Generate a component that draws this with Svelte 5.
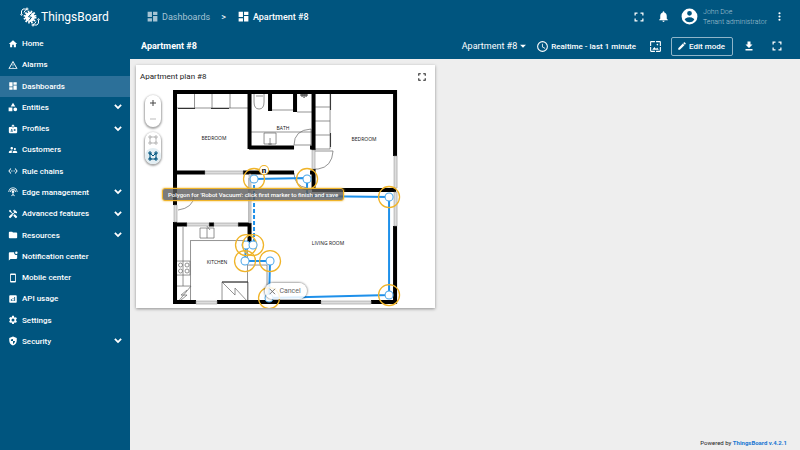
<script>
  const material = {
    home: "M10 20v-6h4v6h5v-8h3L12 3 2 12h3v8z",
    alarms: "M12 5.99L19.53 19H4.47L12 5.99M12 2L1 21h22L12 2zm1 14h-2v2h2v-2zm0-6h-2v4h2v-4z",
    dashboards: "M3 13h8V3H3v10zm0 8h8v-6H3v6zm10 0h8V11h-8v10zm0-18v6h8V3h-8z",
    entities: "M12 2l5.500 9h-11zM1.500 13h9v9h-9zM17.500 13a4.500 4.500 0 1 1 0 9 4.500 4.500 0 0 1 0-9z",
    profiles: "M20 7h-5V4c0-1.100-.9-2-2-2h-2c-1.100 0-2 .9-2 2v3H4c-1.100 0-2 .9-2 2v11c0 1.100.9 2 2 2h16c1.100 0 2-.9 2-2V9c0-1.100-.9-2-2-2zM9 12a1.500 1.500 0 1 1 0 3 1.500 1.500 0 0 1 0-3zm3 6H6v-.75c0-1 2-1.500 3-1.500s3 .5 3 1.500V18zm1-9h-2V4h2v5zm5 7.500h-4V15h4v1.500zm0-3h-4V12h4v1.500z",
    customers: "M16.500 12c1.380 0 2.490-1.120 2.490-2.500S17.880 7 16.500 7 14 8.120 14 9.500s1.120 2.500 2.500 2.500zM9 11c1.660 0 2.990-1.340 2.990-3S10.660 5 9 5 6 6.340 6 8s1.340 3 3 3zm7.500 3c-1.830 0-5.500.92-5.500 2.750V19h11v-2.250c0-1.830-3.670-2.750-5.500-2.750zM9 13c-2.330 0-7 1.170-7 3.500V19h7v-2.250c0-.85.33-2.340 2.370-3.470C10.500 13.100 9.660 13 9 13z",
    rules: "M7.770 6.760L6.230 5.480.82 12l5.410 6.520 1.540-1.280L3.420 12l4.350-5.240zM7 13h2v-2H7v2zm10-2h-2v2h2v-2zm-6 2h2v-2h-2v2zm6.770-7.520l-1.540 1.280L20.580 12l-4.350 5.240 1.540 1.280L23.180 12l-5.410-6.520z",
    edge: "M11 14.300a3 3 0 1 1 2 0V17.600l3.400 3.400-1.400 1.400-3-3-3 3L7.600 21 11 17.600zM12 5c-3.900 0-7 3.100-7 7h2c0-2.800 2.200-5 5-5s5 2.200 5 5h2c0-3.900-3.100-7-7-7zm0-4C5.900 1 1 5.900 1 12h2a9 9 0 0 1 18 0h2c0-6.100-4.900-11-11-11z",
    advanced: "M21.670 18.170l-5.300-5.300h-.99l-2.540 2.540v.99l5.300 5.300c.39.39 1.020.39 1.410 0l2.120-2.120c.39-.38.39-1.020 0-1.410zM17.340 10.190l1.410-1.410 2.120 2.120c1.170-1.170 1.170-3.070 0-4.240l-3.540-3.540-1.410 1.410V1.710L15.220 1l-3.540 3.540.71.71h2.830l-1.410 1.410 1.060 1.060-2.890 2.890-4.130-4.130V5.060L4.830 2.040 2 4.870 5.030 7.900h1.410l4.130 4.130-.85.85H7.600l-5.300 5.300c-.39.39-.39 1.020 0 1.410l2.120 2.120c.39.39 1.020.39 1.410 0l5.300-5.300v-2.120l5.150-5.150 1.060 1.050z",
    resources: "M10 4H4c-1.100 0-2 .9-2 2v12c0 1.100.9 2 2 2h16c1.100 0 2-.9 2-2V8c0-1.100-.9-2-2-2h-8l-2-2z",
    notifications: "M22 9v8c0 1.100-.9 2-2 2H6l-4 4V5c0-1.100.9-2 2-2h11a5 5 0 0 0 7 6zM17 4a3 3 0 1 0 6 0 3 3 0 0 0-6 0z",
    mobile: "M17 1H7c-1.100 0-2 .9-2 2v18c0 1.100.9 2 2 2h10c1.100 0 2-.9 2-2V3c0-1.100-.9-2-2-2zm0 18H7V5h10v14z",
    usage: "M19 3H5c-1.100 0-2 .9-2 2v14c0 1.100.9 2 2 2h14c1.100 0 2-.9 2-2V5c0-1.100-.9-2-2-2zM9 17H7v-5h2v5zm4 0h-2v-3h2v3zm0-5h-2v-2h2v2zm4 5h-2V7h2v10z",
    settings: "M19.140 12.940c.04-.3.06-.61.06-.94s-.02-.64-.07-.94l2.030-1.580a.49.49 0 0 0 .12-.61l-1.920-3.320a.49.49 0 0 0-.59-.22l-2.390.96a7 7 0 0 0-1.620-.94l-.36-2.540A.48.48 0 0 0 13.920 2h-3.840c-.24 0-.43.17-.47.41l-.36 2.540c-.59.24-1.130.57-1.620.94l-2.390-.96a.49.49 0 0 0-.59.22L2.740 8.870a.48.48 0 0 0 .12.610l2.030 1.580a6 6 0 0 0 0 1.880l-2.030 1.580a.49.49 0 0 0-.12.610l1.920 3.320c.12.22.37.29.59.22l2.390-.96c.5.38 1.030.7 1.620.94l.36 2.540c.05.24.24.41.48.41h3.840c.24 0 .44-.17.47-.41l.36-2.540a7 7 0 0 0 1.620-.94l2.390.96c.22.08.47 0 .59-.22l1.920-3.320a.48.48 0 0 0-.12-.610zM12 15.600a3.600 3.600 0 1 1 0-7.200 3.600 3.600 0 0 1 0 7.200z",
    security: "M12 1L3 5v6c0 5.550 3.840 10.740 9 12 5.160-1.260 9-6.450 9-12V5l-9-4zm0 6v5h5c-.5 3.500-2.500 6-5 7v-7H7V8.200z",
    fullscreen: "M3 3h6v2.500H5.500V9H3zM15 3h6v6h-2.500V5.500H15zM3 15h2.500v3.500H9V21H3zM18.500 15H21v6h-6v-2.500h3.500z",
    bell: "M12 22c1.100 0 2-.9 2-2h-4c0 1.100.9 2 2 2zm6-6v-5c0-3.070-1.640-5.640-4.500-6.320V4a1.500 1.500 0 0 0-3 0v.68C7.630 5.360 6 7.920 6 11v5l-2 2v1h16v-1z",
    account: "M12 2a10 10 0 1 0 0 20 10 10 0 0 0 0-20zm0 3a3 3 0 1 1 0 6 3 3 0 0 1 0-6zm0 14.200a7.200 7.200 0 0 1-6-3.220c.03-1.990 4-3.080 6-3.080s5.970 1.090 6 3.080a7.200 7.200 0 0 1-6 3.220z",
    more: "M12 8a2 2 0 1 0 0-4 2 2 0 0 0 0 4zm0 2a2 2 0 1 0 0 4 2 2 0 0 0 0-4zm0 6a2 2 0 1 0 0 4 2 2 0 0 0 0-4z",
    clock: "M12 2a10 10 0 1 0 0 20 10 10 0 0 0 0-20zm0 18a8 8 0 1 1 0-16 8 8 0 0 1 0 16zm.5-13H11v6l5.250 3.150.75-1.230-4.500-2.670z",
    wallpaper: "M4 4h7V2H4c-1.100 0-2 .9-2 2v7h2V4zm6 9l-4 5h12l-3-4-2.030 2.710zM17 8.500a1.500 1.500 0 1 0-3 0 1.500 1.500 0 0 0 3 0zM20 2h-7v2h7v7h2V4c0-1.100-.9-2-2-2zm0 18h-7v2h7c1.100 0 2-.9 2-2v-7h-2v7zM4 13H2v7c0 1.100.9 2 2 2h7v-2H4v-7z",
    pencil: "M3 17.250V21h3.750L17.810 9.940l-3.750-3.750L3 17.250zM20.710 7.040a1 1 0 0 0 0-1.410l-2.340-2.340a1 1 0 0 0-1.410 0l-1.830 1.830 3.750 3.750 1.830-1.830z",
    download: "M19 9h-4V3H9v6H5l7 7 7-7zM5 18v3h14v-3H5z",
    chevron: "M3 8.500L6 5.500l6 6 6-6 3 3-9 9z",
    caret: "M5 9l7 7 7-7z",
  };

  const menu = [
    { name: "Home", icon: "home" },
    { name: "Alarms", icon: "alarms" },
    { name: "Dashboards", icon: "dashboards", active: true },
    { name: "Entities", icon: "entities", toggle: true },
    { name: "Profiles", icon: "profiles", toggle: true },
    { name: "Customers", icon: "customers" },
    { name: "Rule chains", icon: "rules" },
    { name: "Edge management", icon: "edge", toggle: true },
    { name: "Advanced features", icon: "advanced", toggle: true },
    { name: "Resources", icon: "resources", toggle: true },
    { name: "Notification center", icon: "notifications" },
    { name: "Mobile center", icon: "mobile" },
    { name: "API usage", icon: "usage" },
    { name: "Settings", icon: "settings" },
    { name: "Security", icon: "security", toggle: true },
  ];

  // polygon vertices, in plan units
  const markers = [
    [254, 179], [307, 179], [389, 197], [389, 295], [269, 298],
    [270, 261], [245, 261], [246, 245], [253, 245],
  ];
</script>

{#snippet icon(name, size = "small")}
  <svg class="icon {size}" viewBox="0 0 24 24" aria-hidden="true"><path fill-rule="evenodd" d={material[name]} /></svg>
{/snippet}

<div class="app">
  <aside>
    <a class="logo" href="#home">
      <svg viewBox="0 0 40 40" aria-hidden="true">
        <g fill="none" stroke="#fff" stroke-width="2">
          <circle cx="20" cy="20" r="9" fill="#fff" />
          <circle cx="20" cy="20" r="11" stroke-width="4" stroke-dasharray="3.200 2.560" />
          <path stroke="#00557f" d="M23 13l-6 6.500 6 1-5 6.500" />
          <path d="M3 14V8l3-4h5M8 11l2-4 4-3M37 26v6l-3 4h-5M32 29l-2 4-4 3" />
          <circle cx="3" cy="15" r="1.500" />
          <circle cx="14" cy="4" r="2" />
          <circle cx="37" cy="25" r="1.500" />
          <circle cx="26" cy="36" r="2" />
        </g>
      </svg>
      <span>ThingsBoard</span>
    </a>
    <nav>
      {#each menu as item}
        <a href="#menu" class:active={item.active}>
          {@render icon(item.icon)}
          <span>{item.name}</span>
          {#if item.toggle}{@render icon("chevron")}{/if}
        </a>
      {/each}
    </nav>
  </aside>

  <main>
    <header>
      <div class="breadcrumb">
        <a href="#dashboards">{@render icon("dashboards", "large")}Dashboards</a>
        <span>&gt;</span>
        <a class="current" href="#apartment">{@render icon("dashboards", "large")}Apartment #8</a>
      </div>
      <div class="user-bar">
        <button aria-label="Fullscreen">{@render icon("fullscreen", "medium")}</button>
        <button aria-label="Notifications">{@render icon("bell", "large")}</button>
        <div class="user">
          {@render icon("account", "avatar")}
          <div><div>John Doe</div><div>Tenant administrator</div></div>
        </div>
        <button aria-label="More">{@render icon("more", "large")}</button>
      </div>
    </header>

    <div class="toolbar">
      <h1>Apartment #8</h1>
      <div class="actions">
        <button class="state">Apartment #8 {@render icon("caret")}</button>
        <button class="time">{@render icon("clock", "large")}Realtime - last 1 minute</button>
        <button class="image" aria-label="Dashboard image">{@render icon("wallpaper", "large")}</button>
        <button class="edit">{@render icon("pencil")}Edit mode</button>
        <button class="download" aria-label="Export">{@render icon("download", "medium")}</button>
        <button aria-label="Expand dashboard">{@render icon("fullscreen", "medium")}</button>
      </div>
    </div>

    <section class="dashboard">
      <article class="widget">
        <div class="widget-title">
          <h2>Apartment plan #8</h2>
          <button aria-label="Expand widget">{@render icon("fullscreen")}</button>
        </div>
        <div class="map">
          <svg class="plan" viewBox="136 88 299 220" role="img" aria-label="Apartment plan">
            <!-- thin lines: furniture, doors -->
            <g class="thin">
              <path d="M177 108h72M194.500 93v15M212 93v15M230 93v15M249 132h63" />
              <path d="M315 107h15M315 121h15M315 135h15M315 149h15M330 93v56" />
              <path d="M254 93v9q0 7 5 7t5-7v-9zM256 96h7M272 110h22M297 112h16" />
              <path d="M264 133h12v11h-12zM270 138v7M268 144h4" />
              <path d="M294 145q0-15 17-16v16zM313 151h20q-1 16-15 18h-3M178 210q15-2 16-14M249 178v44" />
              <path d="M294 173q0 13 13 15M191 240.500h54M190.500 240v63M183 227v59M177 286h14M177 261h13v14h-13M177 303l14-17" />
              <path d="M200 228h14v10h-14zM207 228v10M210 230l-4-5M248 265h19v38M247.500 240v62" />
              <path d="M222 282h26v20h-26zM222 282l13 13v-7l13 14M187 290l-6 5h6l-6 5" />
              <circle cx="180.500" cy="265" r="2" /><circle cx="187" cy="265" r="2" />
              <circle cx="180.500" cy="271" r="2" /><circle cx="187" cy="271" r="2" />
            </g>
            <path class="detail" d="M178 108.500h17M211 108.500h18M330.500 93v17M330.500 133v14M300 95h8M304 94v4M302 94v3M306 94v3M222 282h26" />
            <!-- walls -->
            <path class="wall" d="M173 92h224M175 90v115M175 222v82M395 90v66M395 226v78M249.500 90v59M313.500 90v60M313.500 169v21M249 147.500h45M310 147.500h5M174 172.500h31M243 172.500h51M310 172.500h4M270 93v18M295 93v19M312 190h84M174 224.500h13M209 224.500h5M238 224.500h12M249.500 223v20M174 302h22M217 302h104M371 302h26" />
            <g class="window">
              <path d="M205 171h38v3h-38zM187 223h22v3h-22zM214 223h24v3h-24zM196 301h21v3h-21zM321 301h50v3h-50zM394 156h3v32h-3zM394 192h3v34h-3zM174 205h3v17h-3zM249 174h2v49h-2zM312 150h3v19h-3z" />
            </g>
            <g class="room">
              <text x="214" y="140">BEDROOM</text>
              <text x="364" y="141">BEDROOM</text>
              <text x="283" y="130">BATH</text>
              <text x="217" y="264">KITCHEN</text>
              <text x="328" y="245">LIVING ROOM</text>
            </g>
            <!-- zone being drawn -->
            <path class="zone" d="M254 179L307 178V196L389 197V295L269 298L270 261H245L246 245H253" />
            <path class="zone dashed" d="M254 179V245" />
            {#each markers as [x, y]}
              <circle class="halo" cx={x} cy={y} r="10.500" />
              <circle class="vertex" cx={x} cy={y} r="4" />
            {/each}
            <circle class="badge" cx="264" cy="170" r="4.500" />
            <text class="badge-text" x="264" y="173">n</text>
          </svg>

          <div class="controls">
            <div>
              <button aria-label="Zoom in"><svg viewBox="0 0 16 16"><path d="M8 5v6M5 8h6" /></svg></button>
              <button class="muted" aria-label="Zoom out"><svg viewBox="0 0 16 16"><path d="M5 8h6" /></svg></button>
            </div>
            <div>
              <button class="muted" aria-label="Draw rectangle"><svg viewBox="0 0 16 16"><path d="M5 5h6v6H5zM4 4h2v2H4zM10 4h2v2h-2zM4 10h2v2H4zM10 10h2v2h-2z" /></svg></button>
              <button class="selected" aria-label="Draw polygon"><svg viewBox="0 0 16 16"><path d="M5 5l3 3 3-3v6H5zM4 4h2v2H4zM10 4h2v2h-2zM4 10h2v2H4zM10 10h2v2h-2z" /></svg></button>
            </div>
          </div>
          <div class="hint">Polygon for 'Robot Vacuum': click first marker to finish and save</div>
          <button class="cancel"><svg viewBox="0 0 10 10" aria-hidden="true"><path d="M2 2l6 6M8 2l-6 6" /></svg>Cancel</button>
        </div>
      </article>
    </section>

    <footer>Powered by <a href="#thingsboard">ThingsBoard v.4.2.1</a></footer>
  </main>
</div>

<style>
  :global(body) {
    font-family: Roboto, sans-serif;
    color: #222;
  }

  .app {
    display: flex;
    min-height: 100vh;
  }

  a {
    color: inherit;
    text-decoration: none;
  }

  button {
    display: flex;
    align-items: center;
    padding: 0;
    border: 0;
    background: none;
    color: inherit;
    font: inherit;
    cursor: pointer;
  }

  .icon {
    display: block;
    flex: none;
    fill: currentColor;
  }

  .small {
    width: 10px;
    height: 10px;
  }

  .medium {
    width: 12px;
    height: 12px;
  }

  .large {
    width: 13px;
    height: 13px;
  }

  .avatar {
    width: 19px;
    height: 19px;
    color: #fff;
  }

  aside {
    flex: none;
    width: 130px;
    background: #00557f;
    color: #fff;
  }

  .logo {
    display: flex;
    align-items: center;
    gap: 1px;
    height: 33px;
    padding-left: 20px;
    font-size: 12px;
  }

  .logo svg {
    width: 20px;
    height: 20px;
  }

  nav {
    display: grid;
    grid-auto-rows: 1fr;
    height: 319px;
    font-size: 7px;
    font-weight: 700;
  }

  nav a {
    display: flex;
    align-items: center;
    gap: 4px;
    padding: 0 7px 0 8px;
  }

  nav a span {
    flex: 1;
    font-size: 8px;
    font-weight: 500;
  }

  nav a.active {
    background: #2c7099;
  }

  main {
    display: flex;
    flex: 1;
    flex-direction: column;
    min-width: 0;
    background: #eee;
  }

  header,
  .toolbar {
    display: flex;
    align-items: center;
    justify-content: space-between;
    background: #00557f;
    color: #fff;
  }

  header {
    height: 33px;
    padding: 0 14px 0 16px;
  }

  .breadcrumb,
  .breadcrumb a,
  .user-bar,
  .user,
  .actions {
    display: flex;
    align-items: center;
  }

  .breadcrumb {
    gap: 11px;
    font-size: 9px;
  }

  .breadcrumb a {
    gap: 3px;
    color: #a6c4d4;
  }

  .breadcrumb .current {
    color: #fff;
    font-weight: 500;
  }

  .user-bar {
    gap: 12px;
  }

  .user-bar .user {
    gap: 4px;
    margin: 0 -6px 0 -2px;
    color: #a6c4d4;
    font-size: 7px;
    font-weight: 300;
    line-height: 10px;
  }

  .toolbar {
    height: 26px;
    padding: 0 17px 0 11px;
  }

  h1,
  h2 {
    margin: 0;
  }

  h1 {
    font-size: 9px;
    font-weight: 700;
  }

  .actions {
    font-size: 8px;
    font-weight: 500;
  }

  .state {
    gap: 1px;
    font-size: 9px;
    font-weight: 400;
  }

  .time {
    gap: 2px;
    margin-left: 8px;
  }

  .image {
    margin: 0 9px 0 13px;
  }

  .edit {
    gap: 2px;
    height: 19px;
    padding: 0 7px 0 5px;
    border: 1px solid #8fb5c9;
    border-radius: 2px;
  }

  .download {
    margin: 0 16px 0 10px;
  }

  .dashboard {
    display: grid;
    flex: 1;
    grid-template-columns: 5fr 6fr;
    align-items: start;
    padding: 6px;
  }

  .widget {
    background: #fff;
    box-shadow: 0 1px 3px rgba(0, 0, 0, 0.4);
  }

  .widget-title {
    display: flex;
    align-items: center;
    justify-content: space-between;
    height: 23px;
    padding: 0 8px 0 4px;
  }

  h2 {
    font-size: 8px;
    font-weight: 400;
  }

  .map {
    position: relative;
  }

  .plan {
    display: block;
    width: 100%;
  }

  .thin {
    fill: none;
    stroke: #666;
    stroke-width: 0.7;
  }

  .detail {
    fill: none;
    stroke: #333;
    stroke-width: 1;
  }

  .wall {
    fill: none;
    stroke: #000;
    stroke-width: 4;
  }

  .window {
    fill: #ddd;
    stroke: #888;
    stroke-width: 0.5;
  }

  .room {
    fill: #111;
    font: 5px "Open Sans", sans-serif;
    text-anchor: middle;
  }

  .zone {
    fill: none;
    stroke: #1e90ea;
    stroke-width: 2;
  }

  .dashed {
    stroke-dasharray: 4 2;
  }

  .halo {
    fill: none;
    stroke: #f0b429;
    stroke-width: 1.3;
  }

  .vertex {
    fill: #fff;
    stroke: #48a4e8;
    stroke-width: 1;
  }

  .badge {
    fill: #fff;
    stroke: #f0b429;
  }

  .badge-text {
    font: 700 8px Roboto, sans-serif;
    text-anchor: middle;
  }

  .controls {
    position: absolute;
    top: 7px;
    left: 9px;
    display: grid;
    gap: 5px;
  }

  .controls div {
    border-radius: 8px;
    background: #fff;
    box-shadow: 0 1px 2px 1px rgba(0, 0, 0, 0.35);
  }

  .controls svg {
    display: block;
    width: 16px;
    height: 16px;
    fill: none;
    stroke: #444;
  }

  .controls .muted svg {
    stroke: #bbb;
  }

  .controls .selected {
    border-radius: 8px;
    background: #e3eef3;
  }

  .controls .selected svg {
    stroke: #00557f;
  }

  .hint {
    position: absolute;
    top: 100px;
    left: 26px;
    padding: 0 5px;
    border: 1px solid #f0b429;
    border-radius: 3px;
    background: rgba(90, 90, 90, 0.8);
    box-shadow: 0 0 2px #f0b429;
    color: #fff;
    font-size: 6px;
    font-weight: 500;
    line-height: 11px;
    white-space: nowrap;
  }

  .cancel {
    position: absolute;
    bottom: 9px;
    left: 50%;
    gap: 3px;
    height: 16px;
    padding: 0 6px 0 3px;
    border-radius: 8px;
    background: rgba(255, 255, 255, 0.85);
    box-shadow: 0 0 2px 1px rgba(0, 0, 0, 0.35);
    color: #666;
    font-size: 7px;
    transform: translateX(-50%);
  }

  .cancel svg {
    width: 9px;
    height: 9px;
    stroke: #666;
  }

  footer {
    padding: 0 13px 3px 0;
    font-size: 6px;
    line-height: 8px;
    text-align: right;
  }

  footer a {
    color: #1976d2;
    font-weight: 700;
  }
</style>
